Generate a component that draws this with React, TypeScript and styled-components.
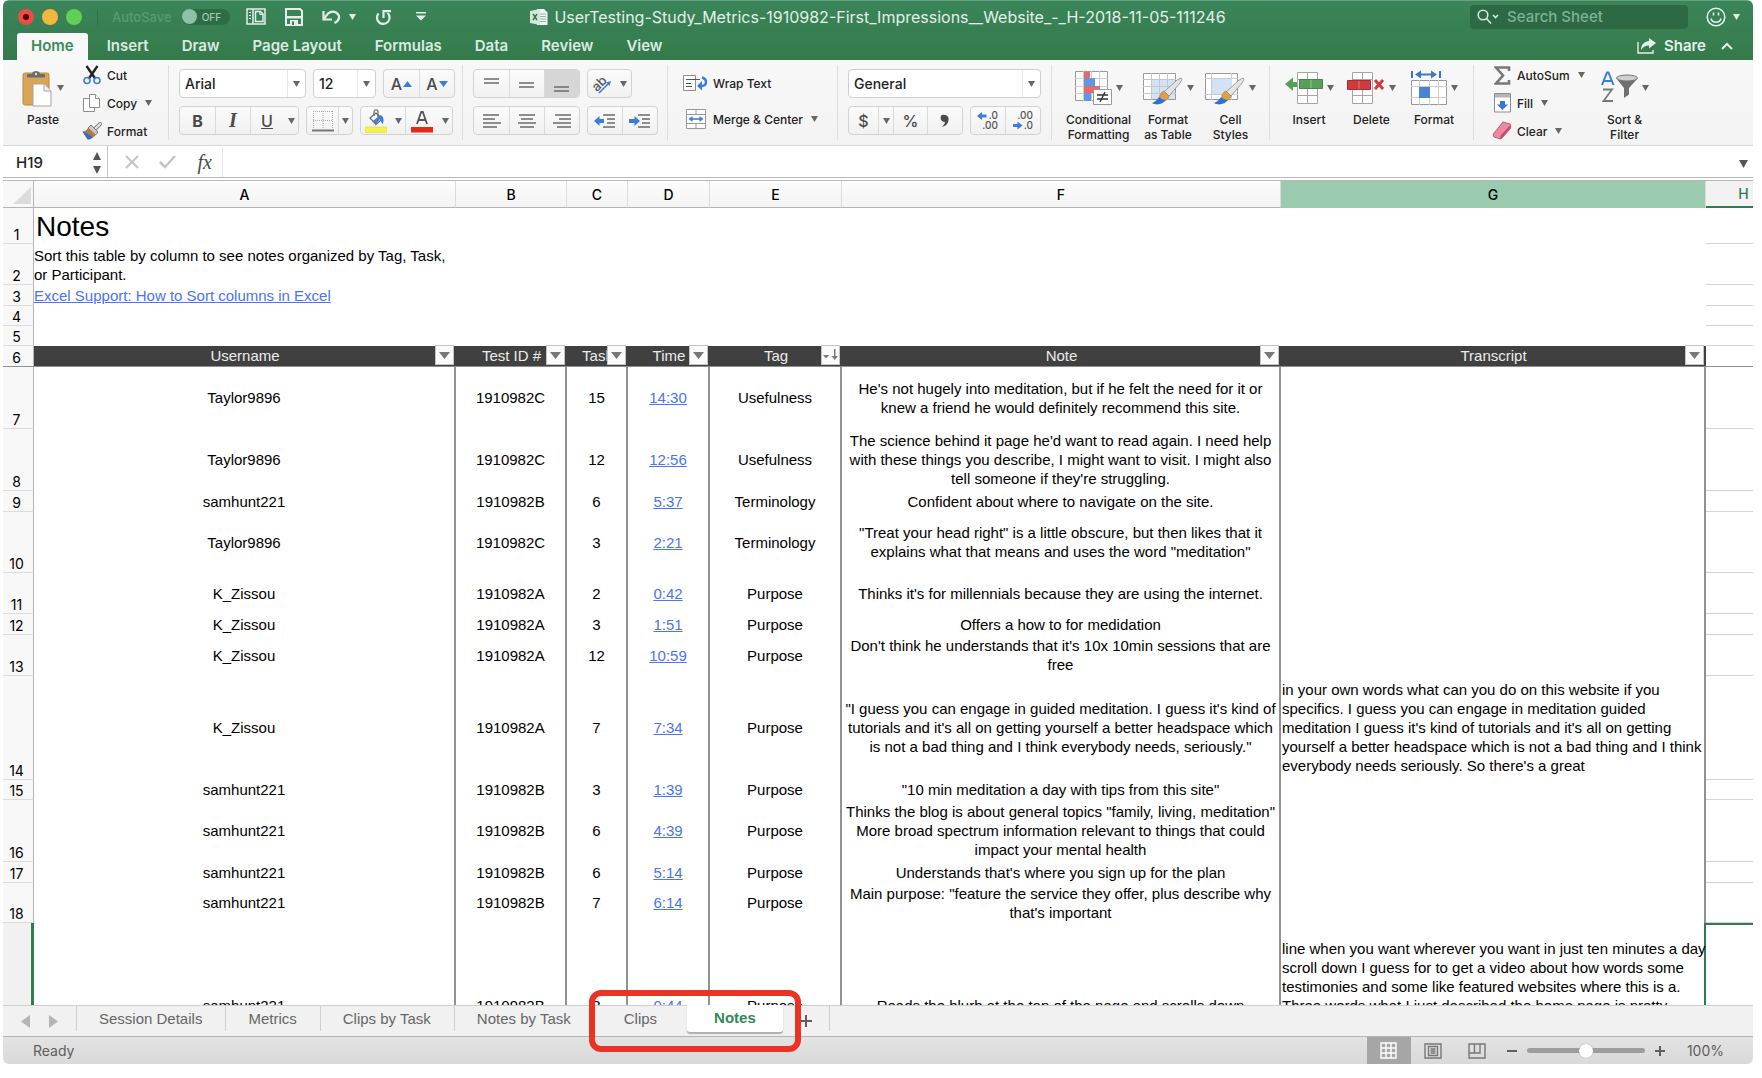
import React from "react";
import styled, { createGlobalStyle, css } from "styled-components";

const GlobalStyle = createGlobalStyle`
  *, *::before, *::after { box-sizing: border-box; }
  body { margin: 0; background: #fff; }
  button, select, input { font: inherit; color: inherit; margin: 0; }
  button { background: none; border: 0; padding: 0; }
`;

const ui = `Inter, "Liberation Sans", sans-serif`;
const arial = `"Liberation Sans", Arial, sans-serif`;

/* ---------- window ---------- */

const Page = styled.div`
  height: 100vh;
  padding: 0 9px 14px 3px;
  font-family: ${ui};
`;
const Window = styled.div`
  display: flex;
  flex-direction: column;
  height: 100%;
  border-radius: 6px;
  overflow: hidden;
  background: #fff;
`;

/* ---------- title bar ---------- */

const Header = styled.header`
  flex: none;
  background: linear-gradient(#3a855a, #357a4b);
  border-top: 1px solid #66a080;
  color: #e3efe8;
`;
const TitleRow = styled.div`
  display: grid;
  grid-template-columns: 1fr auto 1fr;
  align-items: center;
  height: 31px;
`;
const QuickBar = styled.div`
  display: flex;
  align-items: center;
  padding-left: 15px;
`;
const Lights = styled.div`
  display: flex;
  gap: 8px;
  padding-right: 15px;
  margin-right: 14px;
  border-right: 1px solid #2f7048;
`;
const Light = styled.button<{ $color: string; $dot?: boolean }>`
  display: grid;
  place-items: center;
  width: 16px;
  height: 16px;
  border-radius: 50%;
  background: ${(p) => p.$color};
  &::after {
    content: "";
    width: 6px;
    height: 6px;
    border-radius: 50%;
    background: ${(p) => (p.$dot ? "#4d0a08" : "transparent")};
  }
`;
const AutoSave = styled.label`
  display: flex;
  align-items: center;
  gap: 10px;
  margin-right: 16px;
  font-size: 13px;
  font-weight: 500;
  color: #5a9a76;
`;
const Switch = styled.span`
  display: flex;
  align-items: center;
  gap: 5px;
  width: 48px;
  height: 16px;
  border-radius: 8px;
  background: #2e6c47;
  font-size: 10px;
  color: #a5cbb5;
  input {
    appearance: none;
    width: 15px;
    height: 15px;
    border-radius: 50%;
    background: #8fc1a6;
  }
`;
const QuickButton = styled.button<{ $gap?: number }>`
  display: flex;
  align-items: center;
  gap: 7px;
  margin-right: ${(p) => p.$gap ?? 19}px;
`;
const DocTitle = styled.h1`
  display: flex;
  align-items: center;
  gap: 6px;
  margin: 0;
  font-size: 16px;
  font-weight: 400;
  line-height: 20px;
`;
const TitleRight = styled.div`
  display: flex;
  align-items: center;
  justify-content: flex-end;
  gap: 18px;
  padding-right: 13px;
`;
const Search = styled.label`
  display: flex;
  align-items: center;
  gap: 6px;
  width: 218px;
  height: 24px;
  padding-left: 7px;
  border-radius: 4px;
  background: #2d6945;
  input {
    flex: 1;
    min-width: 0;
    border: 0;
    background: none;
    font-size: 15px;
    font-weight: 500;
  }
  input::placeholder { color: #7fb296; opacity: 1; }
`;
const TabRow = styled.nav`
  display: flex;
  gap: 5px;
  height: 28px;
  padding: 1px 20px 0 14px;
`;
const RibbonTab = styled.button<{ $active?: boolean }>`
  padding: 0 14px 2px;
  border-radius: 3px 3px 0 0;
  font-size: 15px;
  font-weight: 600;
  color: #dbeae1;
  ${(p) => p.$active && css`background: #f8f8f8; color: #3b8a5d;`}
`;
const Share = styled.button`
  display: flex;
  align-items: center;
  gap: 7px;
  margin-left: auto;
  margin-right: 10px;
  padding-bottom: 2px;
  font-size: 15px;
  font-weight: 600;
`;

/* ---------- ribbon ---------- */

const Ribbon = styled.div`
  flex: none;
  display: flex;
  height: 86px;
  padding: 5px 0;
  background: linear-gradient(#f8f8f8, #f3f3f3);
  border-bottom: 1px solid #d6d6d6;
  font-size: 12px;
  font-weight: 500;
  color: #222;
`;
const Group = styled.div<{ $width: number; $pad: number; $last?: boolean }>`
  flex: none;
  display: flex;
  width: ${(p) => p.$width}px;
  padding-left: ${(p) => p.$pad}px;
  border-right: 1px solid ${(p) => (p.$last ? "transparent" : "#dedede")};
`;
const Stack = styled.div<{ $gap?: number }>`
  display: flex;
  flex-direction: column;
  align-items: flex-start;
  gap: ${(p) => p.$gap ?? 8}px;
  padding-top: 4px;
`;
const Column = styled.div`
  display: flex;
  flex-direction: column;
  align-items: flex-start;
  margin: -4px 0;
`;
const Line = styled.div`
  display: flex;
  gap: 7px;
`;
const SmallButton = styled.button`
  display: flex;
  flex: none;
  align-items: center;
  gap: 5px;
  height: 28px;
  white-space: nowrap;
  > span { margin-right: 3px; }
`;
const IconSlot = styled.i`
  display: grid;
  place-items: center;
  width: 20px;
`;
const WideSlot = styled(IconSlot)`
  width: 25px;
`;
const BigButton = styled.button<{ $width: number }>`
  display: flex;
  flex-direction: column;
  align-items: center;
  align-self: flex-start;
  gap: 4px;
  width: ${(p) => p.$width}px;
  padding-top: 3px;
  line-height: 15px;
  white-space: pre-line;
`;
const BigIcon = styled.span`
  display: flex;
  align-items: center;
  gap: 4px;
  height: 40px;
`;
const Combo = styled.label<{ $width: number }>`
  display: flex;
  align-items: center;
  width: ${(p) => p.$width}px;
  height: 29px;
  padding-right: 5px;
  border: 1px solid #cfcfcf;
  border-radius: 4px;
  background: #fff;
  select {
    flex: 1;
    min-width: 0;
    height: 27px;
    padding: 0 0 0 5px;
    border: 0;
    border-right: 1px solid #e6e6e6;
    margin-right: 5px;
    background: none;
    appearance: none;
    font-size: 14px;
  }
`;
const Segments = styled.div`
  display: flex;
  height: 29px;
  border: 1px solid #d2d2d2;
  border-radius: 4px;
  overflow: hidden;
  background: linear-gradient(#fbfbfb, #f1f1f1);
`;
const Segment = styled.button<{ $width: number; $on?: boolean; $bare?: boolean }>`
  display: flex;
  align-items: center;
  justify-content: center;
  gap: 1px;
  width: ${(p) => p.$width}px;
  border-right: 1px solid ${(p) => (p.$bare ? "transparent" : "#dadada")};
  background: ${(p) => (p.$on ? "#d6d6d6" : "none")};
  color: #4a4a4a;
  &:last-child { border-right: 0; }
`;
const Glyph = styled.span<{ $bold?: boolean; $italic?: boolean; $underline?: boolean; $serif?: boolean }>`
  font-family: ${(p) => (p.$serif ? `"Liberation Serif", serif` : ui)};
  font-size: ${(p) => (p.$serif ? 20 : 16)}px;
  font-weight: ${(p) => (p.$bold ? 700 : 500)};
  font-style: ${(p) => (p.$italic ? "italic" : "normal")};
  text-decoration: ${(p) => (p.$underline ? "underline" : "none")};
  color: #4a4a4a;
`;

/* ---------- formula bar ---------- */

const FormulaBar = styled.div`
  flex: none;
  display: flex;
  align-items: center;
  height: 35px;
  background: #fff;
  border-bottom: 4px double #b9b9b9;
  color: #c4c4c4;
`;
const NameBox = styled.label`
  display: flex;
  align-items: center;
  justify-content: space-between;
  align-self: stretch;
  width: 105px;
  padding: 2px 6px 0 13px;
  border-right: 1px solid #c8c8c8;
  color: #222;
  input {
    width: 60px;
    padding: 0;
    border: 0;
    font-size: 15px;
    font-weight: 500;
  }
`;
const FormulaTools = styled.div`
  display: flex;
  align-items: center;
  justify-content: space-between;
  width: 115px;
  padding: 2px 7px 0 17px;
  border-right: 1px solid #e6e6e6;
`;
const FormulaInput = styled.input`
  flex: 1;
  min-width: 0;
  border: 0;
  background: none;
`;
const ExpandButton = styled.button`
  width: 20px;
`;

/* ---------- sheet ---------- */

const Sheet = styled.main`
  flex: 1;
  min-height: 0;
  overflow: hidden;
`;
const Grid = styled.table`
  width: 100%;
  table-layout: fixed;
  border-collapse: separate;
  border-spacing: 0;
  font-family: ${arial};
  font-size: 15px;
  line-height: 19px;
  color: #000;
`;
const Row = styled.tr<{ $height: number }>`
  height: ${(p) => p.$height}px;
`;
const ColHead = styled.th<{ $tone?: "selected" | "active" }>`
  padding: 0;
  border-right: 1px solid #dcdcdc;
  border-bottom: 1px solid #b4b4b4;
  background: linear-gradient(#fcfcfc, #f4f4f4);
  font-family: ${ui};
  font-size: 14px;
  font-weight: 500;
  ${(p) => p.$tone === "selected" && css`background: #9acbaf; border-bottom-color: #9acbaf;`}
  ${(p) => p.$tone === "active" && css`
    padding-left: 28px;
    background: #f2f2f2;
    color: #2f7d4f;
    border-right: 0;
    border-bottom: 2px solid #2f7d4f;
  `}
`;
const Corner = styled.td`
  padding: 0 2px 3px 0;
  border-right: 1px solid #b4b4b4;
  border-bottom: 1px solid #b4b4b4;
  background: #f8f8f8;
  vertical-align: bottom;
  svg { display: block; margin-left: auto; }
`;
const RowHead = styled.th<{ $frozen?: boolean; $active?: boolean }>`
  padding: 0 3px 0 0;
  border-right: 1px solid #b4b4b4;
  border-bottom: 1px solid ${(p) => (p.$frozen ? "#8f8f8f" : "#dcdcdc")};
  background: #f8f8f8;
  font-family: ${ui};
  font-size: 14px;
  font-weight: 400;
  line-height: 17px;
  vertical-align: bottom;
  ${(p) => p.$active && css`background: #f1f1f1; border-right: 3px solid #2f7d4f;`}
`;
const Intro = styled.td<{ $title?: boolean }>`
  padding: ${(p) => (p.$title ? "2px 0 0 2px" : 0)};
  font-size: ${(p) => (p.$title ? 28 : 15)}px;
  line-height: ${(p) => (p.$title ? 32 : 19)}px;
  white-space: pre-line;
`;
const Anchor = styled.a`
  color: #4a74f0;
`;
const FieldHead = styled.th`
  position: relative;
  padding: 0 0 1px;
  background: #404040;
  border-bottom: 1px solid #8f8f8f;
  color: #ececec;
  font-weight: 400;
`;
const Filter = styled.button`
  position: absolute;
  top: -1px;
  right: 2px;
  display: grid;
  place-items: center;
  width: 19px;
  height: 20px;
  border: 1px solid #c4c4c4;
  background: #fbfbfb;
`;
const Cell = styled.td<{ $left?: boolean; $top?: boolean; $edge?: boolean }>`
  padding: ${(p) => (p.$top ? "16px 0 0 1px" : p.$left ? "0 0 1px 1px" : "0 0 1px")};
  border-right: 2px solid ${(p) => (p.$edge ? "#2f7d4f" : "#929292")};
  text-align: ${(p) => (p.$left ? "left" : "center")};
  vertical-align: ${(p) => (p.$top ? "top" : "middle")};
  white-space: pre;
`;
const Blank = styled.td<{ $frozen?: boolean; $active?: boolean }>`
  padding: 0;
  border-bottom: 1px solid ${(p) => (p.$frozen ? "#8f8f8f" : "#d4d4d4")};
  ${(p) => p.$active && css`border-top: 2px solid #2f7d4f;`}
`;

/* ---------- sheet tabs and status bar ---------- */

const TabsBar = styled.div`
  flex: none;
  display: flex;
  align-items: flex-start;
  height: 32px;
  background: #f1f1f1;
  border-top: 1px solid #cfcfcf;
  border-bottom: 1px solid #b4b4b4;
  font-family: ${arial};
  font-size: 15px;
  color: #666;
`;
const TabArrows = styled.div`
  display: flex;
  align-items: flex-end;
  gap: 19px;
  width: 74px;
  height: 25px;
  padding-left: 18px;
  border-right: 1px solid #cfcfcf;
`;
const SheetTab = styled.button<{ $active?: boolean; $open?: boolean }>`
  height: 25px;
  padding: ${(p) => (p.$open ? "0 29px" : "0 23px 0 22px")};
  border-right: 1px solid ${(p) => (p.$open ? "transparent" : "#cfcfcf")};
  white-space: nowrap;
  ${(p) => p.$active && css`
    padding: 0 27px 2px;
    margin-top: -1px;
    height: 27px;
    border: 0;
    border-radius: 0 0 3px 3px;
    background: #fff;
    box-shadow: 0 2px 1px #b0b0b0;
    color: #2f8a55;
    font-weight: 700;
  `}
`;
const Marked = styled.div`
  position: relative;
  display: flex;
  &::after {
    content: "";
    position: absolute;
    inset: -16px -18px -20px -6px;
    border: 6px solid #ea3323;
    border-radius: 12px;
    pointer-events: none;
  }
`;
const AddTab = styled.button`
  display: grid;
  place-items: center;
  width: 47px;
  height: 25px;
  padding-top: 4px;
  border-right: 1px solid #cfcfcf;
`;
const StatusBar = styled.footer`
  flex: none;
  display: flex;
  align-items: center;
  height: 27px;
  padding: 0 29px 0 30px;
  background: linear-gradient(#e3e3e3, #d9d9d9);
  font-size: 14px;
  color: #5e5e5e;
`;
const Ready = styled.span`
  margin-right: auto;
`;
const ViewButton = styled.button<{ $on?: boolean }>`
  display: grid;
  place-items: center;
  width: 44px;
  height: 27px;
  background: ${(p) => (p.$on ? "#a6a6a6" : "none")};
`;
const Zoom = styled.div`
  display: flex;
  align-items: center;
  gap: 10px;
  margin: 0 22px 0 8px;
  input {
    appearance: none;
    width: 118px;
    height: 5px;
    border-radius: 3px;
    background: #9d9d9d;
  }
  input::-webkit-slider-thumb {
    appearance: none;
    width: 14px;
    height: 14px;
    border-radius: 50%;
    background: #fff;
    box-shadow: 0 0 1px #888;
  }
`;

/* ---------- icons ---------- */

const Tri = ({ w = 7, h = w - 1, c = "#666", up = false }: { w?: number; h?: number; c?: string; up?: boolean }) => (
  <svg width={w} height={h} viewBox="0 0 10 8" preserveAspectRatio="none">
    <path d={up ? "M0 8h10L5 0z" : "M0 0h10L5 8z"} fill={c} />
  </svg>
);

const SidebarIcon = () => (
  <svg width="20" height="18" fill="none" stroke="#e3efe8">
    <path d="M1 1h18v15H1z" strokeWidth="1.500" />
    <path d="M7 1v15" strokeWidth="1.500" />
    <path d="M3 4.500h2M3 7.500h2M3 10.500h2" />
    <path d="M9.500 3.500h5l2.500 2.500v7.500H9.500z" strokeWidth="1.500" />
    <path d="M14 3.500v3h3" strokeWidth="1.200" />
  </svg>
);
const SaveIcon = () => (
  <svg width="18" height="18">
    <path d="M1 1h14l2 2v14H1z" fill="none" stroke="#e3efe8" strokeWidth="2" />
    <path d="M2 8h14v2.500H2z" fill="#e3efe8" />
    <path d="M5 12h8v5H5z" fill="#e3efe8" />
    <path d="M7 13.500h2V17H7z" fill="#377f53" />
  </svg>
);
const UndoIcon = () => (
  <svg width="20" height="16" fill="none" stroke="#e3efe8" strokeWidth="2.200">
    <path d="M1.500 2v8.500H10" />
    <path d="M2.500 9.500C6 3 10 1.500 14 3.500c5 3 3.500 8-1.500 10.500" />
  </svg>
);
const RedoIcon = () => (
  <svg width="17" height="18" fill="none" stroke="#e3efe8" strokeWidth="2.200">
    <path d="M3.500 5.500A6.300 6.300 0 1 0 12.500 5" />
    <path d="M8.500 10V3.200H16" />
  </svg>
);
const CustomizeIcon = () => (
  <svg width="10" height="9" fill="#e3efe8">
    <path d="M0 0h10v1.500H0zM0 3.500h10L5 8.500z" />
  </svg>
);
const BookIcon = () => (
  <svg width="18" height="18">
    <path d="M7 1h7l3.500 3.500V17H7z" fill="#f2f7f4" />
    <path d="M10 6h6M10 8.500h6M10 11h6M10 13.500h6" stroke="#8db79f" />
    <path d="M0 3l10-2v16L0 15z" fill="#d3e6db" />
    <path d="M3 6l4 6M7 6l-4 6" stroke="#357a4b" strokeWidth="1.500" />
  </svg>
);
const SearchIcon = () => (
  <svg width="22" height="16" fill="none" stroke="#d7e8de" strokeWidth="1.600">
    <circle cx="6" cy="6" r="4.800" />
    <path d="M9.500 9.500l4.500 5M16 6l2.500 2.500L21 6" />
  </svg>
);
const SmileIcon = () => (
  <svg width="20" height="20" fill="none" stroke="#e3efe8" strokeWidth="1.600">
    <circle cx="10" cy="10" r="8.800" />
    <path d="M5 11.500c1.500 5 8.500 5 10 0M7.500 5.500v3M12.500 5.500v3" />
  </svg>
);
const ShareIcon = () => (
  <svg width="20" height="16">
    <path d="M1 4v11h15v-3" fill="none" stroke="#e3efe8" strokeWidth="1.400" />
    <path d="M12 0l7 5-7 5.500V7.500C8 7.500 6 9 4 12c0-5 3-8.500 8-9z" fill="#e3efe8" />
  </svg>
);
const ChevronUp = () => (
  <svg width="12" height="10" fill="none" stroke="#e3efe8" strokeWidth="2">
    <path d="M1 7l5-5 5 5" />
  </svg>
);
const PasteIcon = () => (
  <svg width="31" height="37">
    <rect x="1" y="3" width="26" height="32" rx="2" fill="#d9a657" stroke="#bd8a3d" />
    <path d="M5 7.500V5q0-1 1-1h4c0-4 8-4 8 0h4q1 0 1 1v2.500z" fill="#6d6d6d" />
    <circle cx="14" cy="4" r="1.200" fill="#ddd" />
    <path d="M11 14h11l7 7v15H11z" fill="#fff" stroke="#a5a5a5" />
    <path d="M22 14v7h7" fill="#f1f1f1" stroke="#a5a5a5" />
  </svg>
);
const CutIcon = () => (
  <svg width="18" height="20" fill="none">
    <path d="M3.500 1l9 13M14.500 1l-9 13" stroke="#222" strokeWidth="2.400" />
    <circle cx="4" cy="15.500" r="3" stroke="#3b7ddb" strokeWidth="1.600" />
    <circle cx="14" cy="15.500" r="3" stroke="#3b7ddb" strokeWidth="1.600" />
  </svg>
);
const CopyIcon = () => (
  <svg width="18" height="20" fill="#fff" stroke="#8d8d8d">
    <path d="M.5 5.500h7l4 4v9H.5z" />
    <path d="M6.500 1.500h6l4 4v9h-10z" />
    <path d="M12.500 1.500v4h4" />
  </svg>
);
const BrushIcon = () => (
  <svg width="20" height="18">
    <path d="M18 2L12 8" stroke="#8a8a8a" strokeWidth="4" strokeLinecap="round" />
    <path d="M18 2L12 8" stroke="#e6e6e6" strokeWidth="2" strokeLinecap="round" />
    <path d="M9 3l7 7-2.500 3L6 6z" fill="#c9c9c9" stroke="#777" />
    <path d="M6 6l7.500 7c-2 3-5 4.500-8 4L.500 9.500C3 9.500 4.500 8 6 6z" fill="#b5793f" />
    <path d="M.500 9.500c3 .5 7 3 10 6-1.500 1.500-3.500 2.300-5 2z" fill="#2f6fc6" />
  </svg>
);
const BordersIcon = () => (
  <svg width="22" height="22" fill="none">
    <path d="M1.500 1v18M11 1v18M20.500 1v18M1 1.500h20M1 10.500h20" stroke="#aaa" strokeDasharray="1 1" />
    <path d="M0 20.500h22" stroke="#777" strokeWidth="2" />
  </svg>
);
const FillColorIcon = () => (
  <svg width="22" height="24">
    <path d="M5 9l6-5 6 6-6 5.500z" fill="#fafafa" stroke="#666" strokeWidth="1.200" />
    <path d="M9 7V3c0-3 4-3 4 0v5" fill="none" stroke="#666" strokeWidth="1.200" />
    <path d="M15 6c4 1 4 5 3 9-2-1-2-3-3-5l-4 5-3-3z" fill="#3f7fd9" />
    <path d="M0 18h22v5.500H0z" fill="#f6f14b" stroke="#d8d340" strokeWidth=".5" />
  </svg>
);
const FontColorIcon = () => (
  <svg width="22" height="24">
    <path d="M6 15L10.200 3h1.600L16 15M7.500 11h7" fill="none" stroke="#555" strokeWidth="1.800" />
    <path d="M0 18h22v5.500H0z" fill="#e5281e" />
  </svg>
);
const Bars = ({ rows }: { rows: [number, number, number][] }) => (
  <svg width="20" height="20" stroke="#6a6a6a" strokeWidth="1.400">
    {rows.map(([y, a, b]) => (
      <path key={y} d={`M${a} ${y}H${b}`} />
    ))}
  </svg>
);
const OrientIcon = () => (
  <svg width="22" height="22">
    <text x="0" y="15" transform="rotate(-45 8 10)" fontSize="13" fontWeight="500" fill="#555" fontFamily="Inter">ab</text>
    <path d="M8 20L18 10" stroke="#3b7ddb" strokeWidth="1.600" />
    <path d="M20 8l-5 1.500 3.500 3.500z" fill="#3b7ddb" />
  </svg>
);
const IndentIcon = ({ right }: { right?: boolean }) => (
  <svg width="22" height="16">
    <path d="M9 2h12M13 6h8M13 10h8M9 14h12" stroke="#6a6a6a" strokeWidth="1.400" />
    <path d={right ? "M11 8L5.500 3v3H0v4h5.500v3z" : "M0 8l5.500-5v3H10v4H5.500v3z"} fill="#3b7ddb" />
  </svg>
);
const WrapIcon = () => (
  <svg width="25" height="18" fill="none">
    <path d="M.5 1.500h12v15H.5z" fill="#fff" stroke="#8d8d8d" />
    <path d="M3 5.500h14M3 9.500h5M3 12.500h6" stroke="#555" />
    <path d="M19 3.500c6 2 5 9-1 8.500" stroke="#3b7ddb" strokeWidth="2.400" />
    <path d="M14 12l5-5v9.500z" fill="#3b7ddb" />
  </svg>
);
const MergeIcon = () => (
  <svg width="22" height="22" fill="none">
    <path d="M1.500 1.500h19v19h-19zM1.500 6.500h19M1.500 15.500h19M11 1.500v5M11 15.500v5" stroke="#999" fill="#fff" />
    <path d="M6 11h10" stroke="#3b7ddb" strokeWidth="1.600" />
    <path d="M3.500 11l4-3v6zM18.500 11l-4-3v6z" fill="#3b7ddb" />
  </svg>
);
const DecimalIcon = ({ more }: { more?: boolean }) => (
  <svg width="24" height="22" fontSize="10" fontFamily="Inter" fontWeight="500" fill="#555">
    <text x="22" y="9" textAnchor="end">{more ? ".0" : ".00"}</text>
    <text x="22" y="19" textAnchor="end">{more ? ".00" : ".0"}</text>
    <path
      d={more ? "M1 6l5-4v2.500h4.500v3H6V10z" : "M11.500 15.500l-5-4V14H2v3h4.500v2.500z"}
      fill="#3b7ddb"
    />
  </svg>
);
const ConditionalIcon = () => (
  <svg width="37" height="34">
    <path d="M.5.500h32v29H.5z" fill="#fff" stroke="#999" />
    <path d="M8.500 0v30M16.500 0v30M24.500 0v30M0 7.500h33M0 15.500h33M0 22.500h33" stroke="#ccc" />
    <path d="M9 1h6v6H9zM9 15h16v7H9z" fill="#e8686a" />
    <path d="M9 7h11v8H9zM9 22h7v8H9z" fill="#5f97e4" />
    <path d="M18.500 18.500h18v15h-18z" fill="#fff" stroke="#999" />
    <path d="M22 24h11M22 28h11M30 21l-5 10" stroke="#333" strokeWidth="1.400" />
  </svg>
);
const Paintbrush = () => (
  <>
    <path d="M38 7c2 1 0 3-1 5L26 25l-5-4L34 9z" fill="#e4e4e4" stroke="#888" strokeWidth=".8" />
    <path d="M21 20l5 5c0 4-6 6-9 3-1-3 1-7 4-8z" fill="#d9a14e" stroke="#a97a34" strokeWidth=".6" />
    <path d="M16 26c2 2 4 3 7 3-3 4-9 6-14 3 3-1 5-3 7-6z" fill="#2f6fd6" />
  </>
);
const TableStyleIcon = () => (
  <svg width="40" height="35">
    <path d="M.5 2.500h32v26H.5z" fill="#fff" stroke="#999" />
    <path d="M9 9h23v19H9z" fill="#d3e2f6" />
    <path d="M8.500 2v27M16.500 2v27M24.500 2v27M0 8.500h33M0 15.500h33M0 22.500h33" stroke="#c3c8cf" />
    <Paintbrush />
  </svg>
);
const CellStyleIcon = () => (
  <svg width="40" height="35">
    <path d="M.5 2.500h32v26H.5z" fill="#fff" stroke="#999" />
    <path d="M6.500 2v27M26.500 2v27M0 7.500h33M0 23.500h33" stroke="#ccc" />
    <path d="M7 8h20v15H7z" fill="#d3e2f6" />
    <Paintbrush />
  </svg>
);
const CellsIcon = ({ remove }: { remove?: boolean }) => (
  <svg width="38" height="34">
    <g transform={remove ? "translate(-7 0)" : undefined}>
      <path d="M12.500 1.500h20v31h-20zM22.500 1v32M12 8.500h20M12 24.500h20" fill="#fff" stroke="#a5a5a5" />
    </g>
    {remove ? (
      <>
        <path d="M.5 9.500h23v9H.5z" fill="#cf3a3f" stroke="#b02a30" />
        <path d="M12 10v8" stroke="#e77" />
        <path d="M28 9l8 9M36 9l-8 9" stroke="#cf3a3f" strokeWidth="3" />
      </>
    ) : (
      <>
        <path d="M14.500 8.500h23v9h-23z" fill="#58a058" stroke="#438943" />
        <path d="M26 9v8" stroke="#8c8" />
        <path d="M0 13l8-6.500V11h4v5H8v4z" fill="#58a058" />
      </>
    )}
  </svg>
);
const FormatCellsIcon = () => (
  <svg width="36" height="36">
    <path d="M1 1v7M29 1v7" stroke="#3b76c9" strokeWidth="2" />
    <path d="M6 4.500h18" stroke="#3b76c9" strokeWidth="2" />
    <path d="M4 4.500L10 .500v8zM26 4.500L20 .500v8z" fill="#3b76c9" />
    <path d="M.5 10.500h35v24H.5z" fill="#fff" stroke="#999" />
    <path d="M8.500 10v25M18.500 10v25M27.500 10v25M0 16.500h36M0 27.500h36" stroke="#ccc" />
    <path d="M8 17h11v11H8z" fill="#4b83d3" />
  </svg>
);
const SigmaIcon = () => (
  <svg width="17" height="19">
    <path d="M15 5V1.500H2L9 9.500 2 17.500h13V14" fill="none" stroke="#777" strokeWidth="2.600" />
  </svg>
);
const FillIcon = () => (
  <svg width="17" height="20">
    <path d="M.5.500h16v18.500H.5z" fill="#fff" stroke="#8d8d8d" />
    <path d="M1 1h15v3.500H1z" fill="#b5b5b5" />
    <path d="M6 8h5v3.500h3L8.500 17 3 11.500h3z" fill="#3b76c9" />
  </svg>
);
const EraserIcon = () => (
  <svg width="20" height="20">
    <path d="M11 1l7 2c1 1 1 3 0 5l-9 10-7-2c-1-1-1-3 0-4z" fill="#e98aa5" stroke="#c9587b" />
    <path d="M18.500 4c.5 1 .5 3-.5 4l-9 10c-1-1-1-3 0-4z" fill="#c94d78" />
  </svg>
);
const SortIcon = () => (
  <svg width="37" height="34">
    <path d="M1 14L6 1.500h1.500L12.500 14M3 10h7.500" fill="none" stroke="#3b7ddb" strokeWidth="2" />
    <path d="M2 18.500h9L2.500 30H12" fill="none" stroke="#777" strokeWidth="1.800" />
    <path d="M15 7l8 10v10l5-3.500V17l9-10z" fill="#707070" />
    <ellipse cx="26" cy="7" rx="10.500" ry="3" fill="#cfcfcf" stroke="#777" />
  </svg>
);
const PlusIcon = () => (
  <svg width="12" height="12" stroke="#5e5e5e" strokeWidth="2">
    <path d="M6 0v12M0 6h12" />
  </svg>
);
const SortedIcon = () => (
  <svg width="16" height="12" fill="#777">
    <path d="M0 6h6L3 9.500z" />
    <path d="M11 0h1.500v7H15l-3.200 4L8.500 7H11z" />
  </svg>
);

/* ---------- data ---------- */

type Note = {
  n: number;
  h: number;
  user: string;
  id: string;
  task: number;
  time: string;
  tag: string;
  note: string;
  transcript?: string;
};

const notes: Note[] = [
  { n: 7, h: 62, user: "Taylor9896", id: "1910982C", task: 15, time: "14:30", tag: "Usefulness", note: "He's not hugely into meditation, but if he felt the need for it or\nknew a friend he would definitely recommend this site." },
  { n: 8, h: 62, user: "Taylor9896", id: "1910982C", task: 12, time: "12:56", tag: "Usefulness", note: "The science behind it page he'd want to read again. I need help\nwith these things you describe, I might want to visit. I might also\ntell someone if they're struggling." },
  { n: 9, h: 21, user: "samhunt221", id: "1910982B", task: 6, time: "5:37", tag: "Terminology", note: "Confident about where to navigate on the site." },
  { n: 10, h: 61, user: "Taylor9896", id: "1910982C", task: 3, time: "2:21", tag: "Terminology", note: "\"Treat your head right\" is a little obscure, but then likes that it\nexplains what that means and uses the word \"meditation\"" },
  { n: 11, h: 41, user: "K_Zissou", id: "1910982A", task: 2, time: "0:42", tag: "Purpose", note: "Thinks it's for millennials because they are using the internet." },
  { n: 12, h: 21, user: "K_Zissou", id: "1910982A", task: 3, time: "1:51", tag: "Purpose", note: "Offers a how to for medidation" },
  { n: 13, h: 41, user: "K_Zissou", id: "1910982A", task: 12, time: "10:59", tag: "Purpose", note: "Don't think he understands that it's 10x 10min sessions that are\nfree" },
  { n: 14, h: 104, user: "K_Zissou", id: "1910982A", task: 7, time: "7:34", tag: "Purpose", note: "\"I guess you can engage in guided meditation. I guess it's kind of\ntutorials and it's all on getting yourself a better headspace which\nis not a bad thing and I think everybody needs, seriously.\"", transcript: "in your own words what can you do on this website if you\nspecifics. I guess you can engage in meditation guided\nmeditation I guess it's kind of tutorials and it's all on getting\nyourself a better headspace which is not a bad thing and I think\neverybody needs seriously. So there's a great" },
  { n: 15, h: 20, user: "samhunt221", id: "1910982B", task: 3, time: "1:39", tag: "Purpose", note: "\"10 min meditation a day with tips from this site\"" },
  { n: 16, h: 62, user: "samhunt221", id: "1910982B", task: 6, time: "4:39", tag: "Purpose", note: "Thinks the blog is about general topics \"family, living, meditation\"\nMore broad spectrum information relevant to things that could\nimpact your mental health" },
  { n: 17, h: 21, user: "samhunt221", id: "1910982B", task: 6, time: "5:14", tag: "Purpose", note: "Understands that's where you sign up for the plan" },
  { n: 18, h: 40, user: "samhunt221", id: "1910982B", task: 7, time: "6:14", tag: "Purpose", note: "Main purpose: \"feature the service they offer, plus describe why\nthat's important" },
  { n: 19, h: 166, user: "samhunt221", id: "1910982B", task: 8, time: "0:44", tag: "Purpose", note: "Reads the blurb at the top of the page and scrolls down", transcript: "line when you want wherever you want in just ten minutes a day\nscroll down I guess for to get a video about how words some\ntestimonies and some like featured websites where this is a.\nThree words what I just described the home page is pretty" },
];

const columns = [422, 111, 61, 82, 132, 439, 425];
const fields = ["Username", "Test ID #", "Task", "Time", "Tag", "Note", "Transcript"];
const ribbonTabs = ["Home", "Insert", "Draw", "Page Layout", "Formulas", "Data", "Review", "View"];
const sheetTabs = ["Session Details", "Metrics", "Clips by Task", "Notes by Task"];

/* ---------- sections ---------- */

const TitleBar = () => (
  <Header>
    <TitleRow>
      <QuickBar>
        <Lights>
          <Light $color="#ee4b47" $dot aria-label="Close" />
          <Light $color="#f5b63c" aria-label="Minimize" />
          <Light $color="#5fd053" aria-label="Zoom window" />
        </Lights>
        <AutoSave>
          AutoSave
          <Switch>
            <input type="checkbox" />
            OFF
          </Switch>
        </AutoSave>
        <QuickButton aria-label="Sidebar"><SidebarIcon /></QuickButton>
        <QuickButton aria-label="Save"><SaveIcon /></QuickButton>
        <QuickButton aria-label="Undo"><UndoIcon /><Tri c="#e3efe8" /></QuickButton>
        <QuickButton $gap={24} aria-label="Redo"><RedoIcon /></QuickButton>
        <QuickButton $gap={0} aria-label="Customize toolbar"><CustomizeIcon /></QuickButton>
      </QuickBar>
      <DocTitle>
        <BookIcon />
        UserTesting-Study_Metrics-1910982-First_Impressions__Website_-_H-2018-11-05-111246
      </DocTitle>
      <TitleRight>
        <Search>
          <SearchIcon />
          <input type="search" placeholder="Search Sheet" aria-label="Search Sheet" />
        </Search>
        <QuickButton $gap={0} aria-label="Feedback"><SmileIcon /><Tri c="#e3efe8" /></QuickButton>
      </TitleRight>
    </TitleRow>
    <TabRow>
      {ribbonTabs.map((t, i) => (
        <RibbonTab key={t} $active={i === 0}>{t}</RibbonTab>
      ))}
      <Share><ShareIcon />Share</Share>
      <QuickButton $gap={0} aria-label="Collapse ribbon"><ChevronUp /></QuickButton>
    </TabRow>
  </Header>
);

const RibbonBar = () => (
  <Ribbon>
    <Group $width={166} $pad={15}>
      <BigButton $width={50}>
        <BigIcon><PasteIcon /><Tri /></BigIcon>
        Paste
      </BigButton>
      <Line>
        <span />
        <span />
        <Column>
          <SmallButton><IconSlot><CutIcon /></IconSlot>Cut</SmallButton>
          <SmallButton><IconSlot><CopyIcon /></IconSlot><span>Copy</span><Tri /></SmallButton>
          <SmallButton><IconSlot><BrushIcon /></IconSlot>Format</SmallButton>
        </Column>
      </Line>
    </Group>

    <Group $width={294} $pad={10}>
      <Stack>
        <Line>
          <Combo $width={127}>
            <select aria-label="Font"><option>Arial</option></select>
            <Tri />
          </Combo>
          <Combo $width={63}>
            <select aria-label="Font size"><option>12</option></select>
            <Tri />
          </Combo>
          <Segments>
            <Segment $width={36} aria-label="Increase font size"><Glyph>A</Glyph><Tri up c="#3b7ddb" w={9} h={6} /></Segment>
            <Segment $width={34} aria-label="Decrease font size"><Glyph>A</Glyph><Tri c="#3b7ddb" w={9} h={6} /></Segment>
          </Segments>
        </Line>
        <Line>
          <Segments>
            <Segment $width={36}><Glyph $bold>B</Glyph></Segment>
            <Segment $width={35}><Glyph $serif $italic $bold>I</Glyph></Segment>
            <Segment $width={33} $bare><Glyph $underline>U</Glyph></Segment>
            <Segment $width={14} aria-label="Underline style"><Tri /></Segment>
          </Segments>
          <Segments>
            <Segment $width={32} aria-label="Borders"><BordersIcon /></Segment>
            <Segment $width={13} aria-label="Border style"><Tri /></Segment>
          </Segments>
          <Segments>
            <Segment $width={30} $bare aria-label="Fill color"><FillColorIcon /></Segment>
            <Segment $width={15} aria-label="Fill color list"><Tri /></Segment>
            <Segment $width={32} $bare aria-label="Font color"><FontColorIcon /></Segment>
            <Segment $width={14} aria-label="Font color list"><Tri /></Segment>
          </Segments>
        </Line>
      </Stack>
    </Group>

    <Group $width={205} $pad={10}>
      <Stack>
        <Line>
          <Segments>
            <Segment $width={36} aria-label="Align top"><Bars rows={[[5, 2, 17], [9, 2, 17]]} /></Segment>
            <Segment $width={35} aria-label="Align middle"><Bars rows={[[9, 2, 17], [13, 2, 17]]} /></Segment>
            <Segment $width={34} $on aria-label="Align bottom"><Bars rows={[[13, 2, 17], [17, 2, 17]]} /></Segment>
          </Segments>
          <Segments>
            <Segment $width={28} $bare aria-label="Orientation"><OrientIcon /></Segment>
            <Segment $width={15} aria-label="Orientation list"><Tri /></Segment>
          </Segments>
        </Line>
        <Line>
          <Segments>
            <Segment $width={36} aria-label="Align left"><Bars rows={[[4, 1, 17], [8, 1, 13], [12, 1, 19], [16, 1, 15]]} /></Segment>
            <Segment $width={35} aria-label="Center"><Bars rows={[[4, 2, 18], [8, 4, 16], [12, 1, 19], [16, 3, 17]]} /></Segment>
            <Segment $width={34} aria-label="Align right"><Bars rows={[[4, 3, 19], [8, 7, 19], [12, 1, 19], [16, 5, 19]]} /></Segment>
          </Segments>
          <Segments>
            <Segment $width={35} aria-label="Decrease indent"><IndentIcon /></Segment>
            <Segment $width={34} aria-label="Increase indent"><IndentIcon right /></Segment>
          </Segments>
        </Line>
      </Stack>
    </Group>

    <Group $width={170} $pad={15}>
      <Stack>
        <SmallButton><WideSlot><WrapIcon /></WideSlot>Wrap Text</SmallButton>
        <SmallButton><WideSlot><MergeIcon /></WideSlot><span>Merge &amp; Center</span><Tri /></SmallButton>
      </Stack>
    </Group>

    <Group $width={214} $pad={10}>
      <Stack>
        <Combo $width={193}>
          <select aria-label="Number format"><option>General</option></select>
          <Tri />
        </Combo>
        <Line>
          <Segments>
            <Segment $width={30}><Glyph>$</Glyph></Segment>
            <Segment $width={15} aria-label="Currency list"><Tri /></Segment>
            <Segment $width={34}><Glyph>%</Glyph></Segment>
            <Segment $width={34} aria-label="Comma style">
              <svg width="10" height="14"><path d="M2 1c5-1 8 2 6 7-1 3-3 4-6 5 2-2 3-4 3-5C1 8-1 3 2 1z" fill="#4a4a4a" /></svg>
            </Segment>
          </Segments>
          <Segments>
            <Segment $width={35} aria-label="Increase decimal"><DecimalIcon more /></Segment>
            <Segment $width={34} aria-label="Decrease decimal"><DecimalIcon /></Segment>
          </Segments>
        </Line>
      </Stack>
    </Group>

    <Group $width={218} $pad={10}>
      <BigButton $width={73}><BigIcon><ConditionalIcon /><Tri /></BigIcon>{"Conditional\nFormatting"}</BigButton>
      <BigButton $width={66}><BigIcon><TableStyleIcon /><Tri /></BigIcon>{"Format\nas Table"}</BigButton>
      <BigButton $width={59}><BigIcon><CellStyleIcon /><Tri /></BigIcon>{"Cell\nStyles"}</BigButton>
    </Group>

    <Group $width={204} $pad={8}>
      <BigButton $width={62}><BigIcon><CellsIcon /><Tri /></BigIcon>Insert</BigButton>
      <BigButton $width={63}><BigIcon><CellsIcon remove /><Tri /></BigIcon>Delete</BigButton>
      <BigButton $width={62}><BigIcon><FormatCellsIcon /><Tri /></BigIcon>Format</BigButton>
    </Group>

    <Group $width={210} $pad={18} $last>
      <Column>
        <SmallButton><IconSlot><SigmaIcon /></IconSlot><span>AutoSum</span><Tri /></SmallButton>
        <SmallButton><IconSlot><FillIcon /></IconSlot><span>Fill</span><Tri /></SmallButton>
        <SmallButton><IconSlot><EraserIcon /></IconSlot><span>Clear</span><Tri /></SmallButton>
      </Column>
      <BigButton $width={80}><BigIcon><SortIcon /><Tri /></BigIcon>{"Sort &\nFilter"}</BigButton>
    </Group>
  </Ribbon>
);

const FormulaRow = () => (
  <FormulaBar>
    <NameBox>
      <input aria-label="Name box" defaultValue="H19" />
      <svg width="8" height="22" fill="#555"><path d="M0 8h8L4 0zM0 14h8l-4 8z" /></svg>
    </NameBox>
    <FormulaTools>
      <button aria-label="Cancel">
        <svg width="14" height="14" stroke="#c4c4c4" strokeWidth="2"><path d="M1 1l12 12M13 1L1 13" /></svg>
      </button>
      <button aria-label="Enter">
        <svg width="18" height="14" fill="none" stroke="#c4c4c4" strokeWidth="2.500"><path d="M1 7l5 5L16 1" /></svg>
      </button>
      <SmallButton aria-label="Insert function"><Glyph $serif $italic>fx</Glyph></SmallButton>
    </FormulaTools>
    <FormulaInput aria-label="Formula" />
    <ExpandButton aria-label="Expand formula bar"><Tri w={9} c="#555" /></ExpandButton>
  </FormulaBar>
);

const SheetGrid = () => (
  <Sheet>
    <Grid>
      <colgroup>
        <col width={31} />
        {columns.map((w, i) => <col key={i} width={w} />)}
        <col />
      </colgroup>
      <thead>
        <Row $height={27}>
          <Corner><svg width="18" height="17"><path d="M18 0v17H0z" fill="#dcdcdc" /></svg></Corner>
          {["A", "B", "C", "D", "E", "F"].map((c) => <ColHead key={c}>{c}</ColHead>)}
          <ColHead $tone="selected">G</ColHead>
          <ColHead $tone="active">H</ColHead>
        </Row>
      </thead>
      <tbody>
        <Row $height={36}><RowHead>1</RowHead><Intro colSpan={7} $title>Notes</Intro><Blank /></Row>
        <Row $height={41}>
          <RowHead>2</RowHead>
          <Intro colSpan={7}>{"Sort this table by column to see notes organized by Tag, Task,\nor Participant."}</Intro>
          <Blank />
        </Row>
        <Row $height={21}>
          <RowHead>3</RowHead>
          <Intro colSpan={7}><Anchor href="#sort">Excel Support: How to Sort columns in Excel</Anchor></Intro>
          <Blank />
        </Row>
        <Row $height={20}><RowHead>4</RowHead><Intro colSpan={7} /><Blank /></Row>
        <Row $height={20}><RowHead>5</RowHead><Intro colSpan={7} /><Blank /></Row>
        <Row $height={21}>
          <RowHead $frozen>6</RowHead>
          {fields.map((f) => (
            <FieldHead key={f}>
              {f}
              <Filter aria-label={`Filter ${f}`}>{f === "Tag" ? <SortedIcon /> : <Tri w={11} h={7} c="#777" />}</Filter>
            </FieldHead>
          ))}
          <Blank $frozen />
        </Row>
        {notes.map((r) => (
          <Row key={r.n} $height={r.h}>
            <RowHead $active={r.n === 19}>{r.n}</RowHead>
            <Cell>{r.user}</Cell>
            <Cell>{r.id}</Cell>
            <Cell>{r.task}</Cell>
            <Cell><Anchor href={`#clip-${r.n}`}>{r.time}</Anchor></Cell>
            <Cell>{r.tag}</Cell>
            <Cell>{r.note}</Cell>
            <Cell $left $top={r.n === 19} $edge={r.n === 19}>{r.transcript}</Cell>
            <Blank $active={r.n === 19} />
          </Row>
        ))}
      </tbody>
    </Grid>
  </Sheet>
);

const SheetTabs = () => (
  <TabsBar>
    <TabArrows>
      <button aria-label="Previous sheet"><svg width="9" height="13"><path d="M9 0v13L0 6.500z" fill="#b4b4b4" /></svg></button>
      <button aria-label="Next sheet"><svg width="9" height="13"><path d="M0 0v13l9-6.500z" fill="#b4b4b4" /></svg></button>
    </TabArrows>
    {sheetTabs.map((t) => <SheetTab key={t}>{t}</SheetTab>)}
    <Marked>
      <SheetTab $open>Clips</SheetTab>
      <SheetTab $active>Notes</SheetTab>
    </Marked>
    <AddTab aria-label="Add sheet"><PlusIcon /></AddTab>
  </TabsBar>
);

const Status = () => (
  <StatusBar>
    <Ready>Ready</Ready>
    <ViewButton $on aria-label="Normal view">
      <svg width="17" height="17" fill="none" stroke="#fff" strokeWidth="1.400">
        <path d="M1 1h15v15H1zM6 1v15M11 1v15M1 6h15M1 11h15" />
      </svg>
    </ViewButton>
    <ViewButton aria-label="Page layout view">
      <svg width="18" height="16" fill="none" stroke="#777" strokeWidth="1.400">
        <path d="M1 1h16v14H1zM4.500 3.500h9v9h-9zM6.500 6h5M6.500 8h5M6.500 10h5" />
      </svg>
    </ViewButton>
    <ViewButton aria-label="Page break view">
      <svg width="18" height="16" fill="none" stroke="#777" strokeWidth="1.400">
        <path d="M1 1h16v14H1zM1 10h11V1M6.500 1v9" />
      </svg>
    </ViewButton>
    <Zoom>
      <button aria-label="Zoom out"><svg width="10" height="10"><path d="M0 5h10" stroke="#5e5e5e" strokeWidth="2" /></svg></button>
      <input type="range" min={0} max={100} defaultValue={50} aria-label="Zoom" />
      <button aria-label="Zoom in"><svg width="10" height="10"><path d="M0 5h10M5 0v10" stroke="#5e5e5e" strokeWidth="2" /></svg></button>
    </Zoom>
    100%
  </StatusBar>
);

export default function App() {
  return (
    <>
      <GlobalStyle />
      <Page>
        <Window>
          <TitleBar />
          <RibbonBar />
          <FormulaRow />
          <SheetGrid />
          <SheetTabs />
          <Status />
        </Window>
      </Page>
    </>
  );
}
